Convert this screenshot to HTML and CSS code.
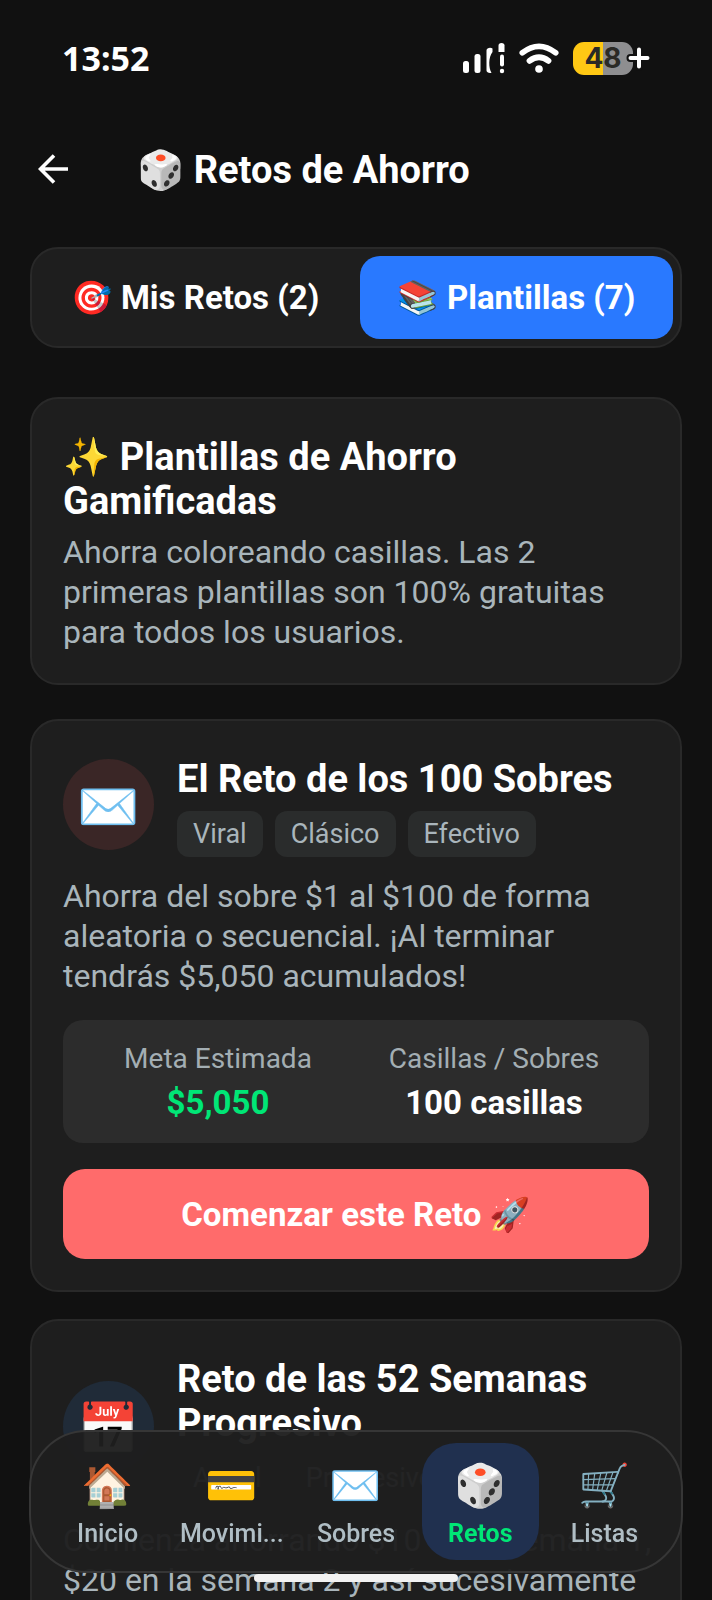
FILE: index.html
```html
<!DOCTYPE html>
<html lang="es">
<head>
<meta charset="utf-8">
<meta name="viewport" content="width=device-width, initial-scale=1">
<title>Retos de Ahorro</title>
<link rel="stylesheet" href="styles.css">
</head>
<body>
<div class="screen">
  <div class="status">
    <time class="clock">13:52</time>
    <div class="indicators">
      <svg class="signal" viewBox="0 0 42 31" aria-label="Señal">
        <g fill="#fff">
          <rect x="0" y="18" width="6" height="12" rx="2.5"/>
          <rect x="11.500" y="11" width="6" height="19" rx="2.500"/>
          <path d="M29.500 5.500C28 4.300 23.500 4.500 23.500 7.500V27.500C23.500 29.500 26.500 30.600 28.500 29.700C25.500 25 25.300 14 29.500 9Z"/>
          <path d="M35.500 9V2.500Q35.500 0 38.500 0Q41.500 0 41.500 2.500V9Z"/>
          <rect x="37" y="11.500" width="4" height="12" rx="2"/>
          <circle cx="39" cy="28" r="2.200"/>
        </g>
      </svg>
      <svg class="wifi" viewBox="0 0 42 31" aria-label="Wi-Fi">
        <g fill="none" stroke="#fff" stroke-linecap="round">
          <path d="M3.500 10Q21 -3.500 38.500 10" stroke-width="6"/>
          <path d="M11 18.500Q21 11 31 18.500" stroke-width="6"/>
        </g>
        <circle cx="21" cy="27" r="4" fill="#fff"/>
      </svg>
      <span class="battery">
        <span class="battery-level">48</span>
        <svg class="plus" viewBox="0 0 24 26" aria-hidden="true">
          <path d="M13 4.500V21.500M4.500 13H21.500" stroke="#111" stroke-width="8" stroke-linecap="round"/>
          <path d="M13 4.500V21.500M4.500 13H21.500" stroke="#fff" stroke-width="4" stroke-linecap="round"/>
        </svg>
      </span>
    </div>
  </div>

  <header class="header">
    <button class="back" type="button" aria-label="Volver">
      <svg viewBox="0 0 32 32"><path d="M30 15H3M16 1.500L2.500 15L16 28.500" fill="none" stroke="#fff" stroke-width="3.600"/></svg>
    </button>
    <h1 class="title">🎲 Retos de Ahorro</h1>
  </header>

  <main class="content">
    <div class="tabs" role="tablist">
      <button class="tab" type="button" role="tab" aria-selected="false">🎯 Mis Retos (2)</button>
      <button class="tab tab-active" type="button" role="tab" aria-selected="true">📚 Plantillas (7)</button>
    </div>

    <section class="card intro">
      <h2 class="title">✨ Plantillas de Ahorro Gamificadas</h2>
      <p class="text">Ahorra coloreando casillas. Las 2 primeras plantillas son 100% gratuitas para todos los usuarios.</p>
    </section>

    <article class="card">
      <div class="card-head">
        <div class="badge badge-red">✉️</div>
        <div class="card-info">
          <h2 class="title">El Reto de los 100 Sobres</h2>
          <ul class="tags"><li class="tag">Viral</li><li class="tag">Clásico</li><li class="tag">Efectivo</li></ul>
        </div>
      </div>
      <p class="text">Ahorra del sobre $1 al $100 de forma aleatoria o secuencial. ¡Al terminar tendrás $5,050 acumulados!</p>
      <dl class="stats">
        <div class="stat"><dt>Meta Estimada</dt><dd class="money">$5,050</dd></div>
        <div class="stat"><dt>Casillas / Sobres</dt><dd>100 casillas</dd></div>
      </dl>
      <button class="start" type="button">Comenzar este Reto 🚀</button>
    </article>

    <article class="card">
      <div class="card-head">
        <div class="badge badge-blue">📅</div>
        <div class="card-info">
          <h2 class="title">Reto de las 52 Semanas Progresivo</h2>
          <ul class="tags"><li class="tag">Anual</li><li class="tag">Progresivo</li></ul>
        </div>
      </div>
      <p class="text">Comienza ahorrando $10 en la semana 1, $20 en la semana 2 y así sucesivamente</p>
    </article>
  </main>

  <nav class="nav">
    <a class="nav-item" href="#inicio"><span class="nav-icon">🏠</span><span class="nav-label">Inicio</span></a>
    <a class="nav-item" href="#movimientos"><span class="nav-icon">💳</span><span class="nav-label">Movimi...</span></a>
    <a class="nav-item" href="#sobres"><span class="nav-icon">✉️</span><span class="nav-label">Sobres</span></a>
    <a class="nav-item nav-active" href="#retos" aria-current="page"><span class="nav-icon">🎲</span><span class="nav-label">Retos</span></a>
    <a class="nav-item" href="#listas"><span class="nav-icon">🛒</span><span class="nav-label">Listas</span></a>
  </nav>
  <div class="home-bar"></div>
</div>
</body>
</html>
```
FILE: styles.css
```css
* { box-sizing: border-box; }

body {
  margin: 0;
  background: #111;
  color: #fff;
  font-family: Roboto, "Noto Color Emoji", sans-serif;
}

button { font: inherit; color: inherit; border: 0; background: none; padding: 0; }
h1, h2, p, ul, dl, dd { margin: 0; padding: 0; }

.screen { height: 100vh; overflow: hidden; }

.status {
  display: flex;
  justify-content: space-between;
  align-items: center;
  height: 116px;
  padding: 0 62px;
}
.clock { font: 700 34px/40px "Noto Sans", sans-serif; }
.indicators { display: flex; align-items: center; gap: 14px; }
.signal { width: 42px; height: 31px; }
.wifi { width: 40px; height: 30px; }
.battery { display: flex; align-items: center; }
.battery-level {
  width: 60px;
  height: 33px;
  border-radius: 11px;
  background: linear-gradient(90deg, #ffc814 50%, #8e8e90 50%);
  color: #2b2a26;
  font: 700 28px/33px Inter, sans-serif;
  text-align: center;
}
.plus { width: 24px; height: 26px; margin-left: -7px; }

.header {
  display: flex;
  align-items: center;
  gap: 67px;
  height: 107px;
  padding: 0 38px;
}
.back { width: 32px; height: 32px; }
.back svg { display: block; }
.title { font-size: 38px; line-height: 44px; font-weight: 700; }

.content { display: flex; flex-direction: column; padding: 24px 30px; }

.tabs {
  display: flex;
  gap: 8px;
  padding: 7px;
  margin-bottom: 49px;
  background: #1e1e1e;
  border: 2px solid #292929;
  border-radius: 28px;
}
.tab {
  flex: 1;
  height: 83px;
  border-radius: 20px;
  font-size: 33px;
  font-weight: 700;
}
.tab-active { background: #2979ff; }

.card {
  padding: 31px;
  margin-bottom: 27px;
  background: #1e1e1e;
  border: 2px solid #292929;
  border-radius: 28px;
}
.intro { padding-top: 36px; margin-bottom: 34px; }
.intro .title { margin-bottom: 9px; }
.text { margin-right: -12px; font-size: 32px; line-height: 40px; color: #a9b5bb; }

.card-head { display: flex; align-items: center; gap: 23px; margin-bottom: 19px; }
.badge {
  display: flex;
  flex: none;
  align-items: center;
  justify-content: center;
  width: 91px;
  height: 91px;
  padding-top: 4px;
  border-radius: 50%;
  font-size: 50px;
  line-height: 60px;
}
.badge-red { background: #3a2626; }
.badge-blue { background: #202b38; }
.card-info { padding-top: 5px; }
.card-info .title { margin-bottom: 10px; }
.tags { display: flex; gap: 12px; list-style: none; }
.tag {
  padding: 8px 16px;
  border-radius: 12px;
  background: #2a2c2c;
  color: #a9b5bb;
  font-size: 27px;
  line-height: 30px;
}

.stats {
  display: flex;
  margin: 24px 0 26px;
  padding: 21px 17px 20px;
  background: #2c2c2c;
  border-radius: 20px;
  text-align: center;
}
.stat { flex: 1; }
.stat dt { font-size: 28px; line-height: 36px; color: #a3aeb3; }
.stat dd { margin-top: 6px; font-size: 33px; line-height: 40px; font-weight: 700; }
.stat .money { color: #00e676; }
.start {
  display: block;
  width: 100%;
  height: 90px;
  background: #ff6b6b;
  border-radius: 22px;
  font-size: 33px;
  font-weight: 700;
}

.nav {
  position: fixed;
  left: 29px;
  right: 29px;
  bottom: 27px;
  display: flex;
  gap: 7px;
  padding: 11px 18px;
  background: rgba(30, 30, 30, .96);
  border: 2px solid #363636;
  border-radius: 58px;
}
.nav-item {
  display: flex;
  flex: 1;
  flex-direction: column;
  align-items: center;
  height: 117px;
  padding-top: 17px;
  border-radius: 34px;
  color: #b0bec5;
  text-decoration: none;
}
.nav-active { background: #20304f; color: #00e676; }
.nav-icon { font-size: 42px; line-height: 52px; }
.nav-label { margin-top: 7px; font-size: 25px; line-height: 30px; font-weight: 500; }
.nav-active .nav-label { font-weight: 700; }

.home-bar {
  position: fixed;
  left: 50%;
  bottom: 18px;
  width: 204px;
  height: 8px;
  margin-left: -102px;
  border-radius: 4px;
  background: #f2f2f2;
}
```
